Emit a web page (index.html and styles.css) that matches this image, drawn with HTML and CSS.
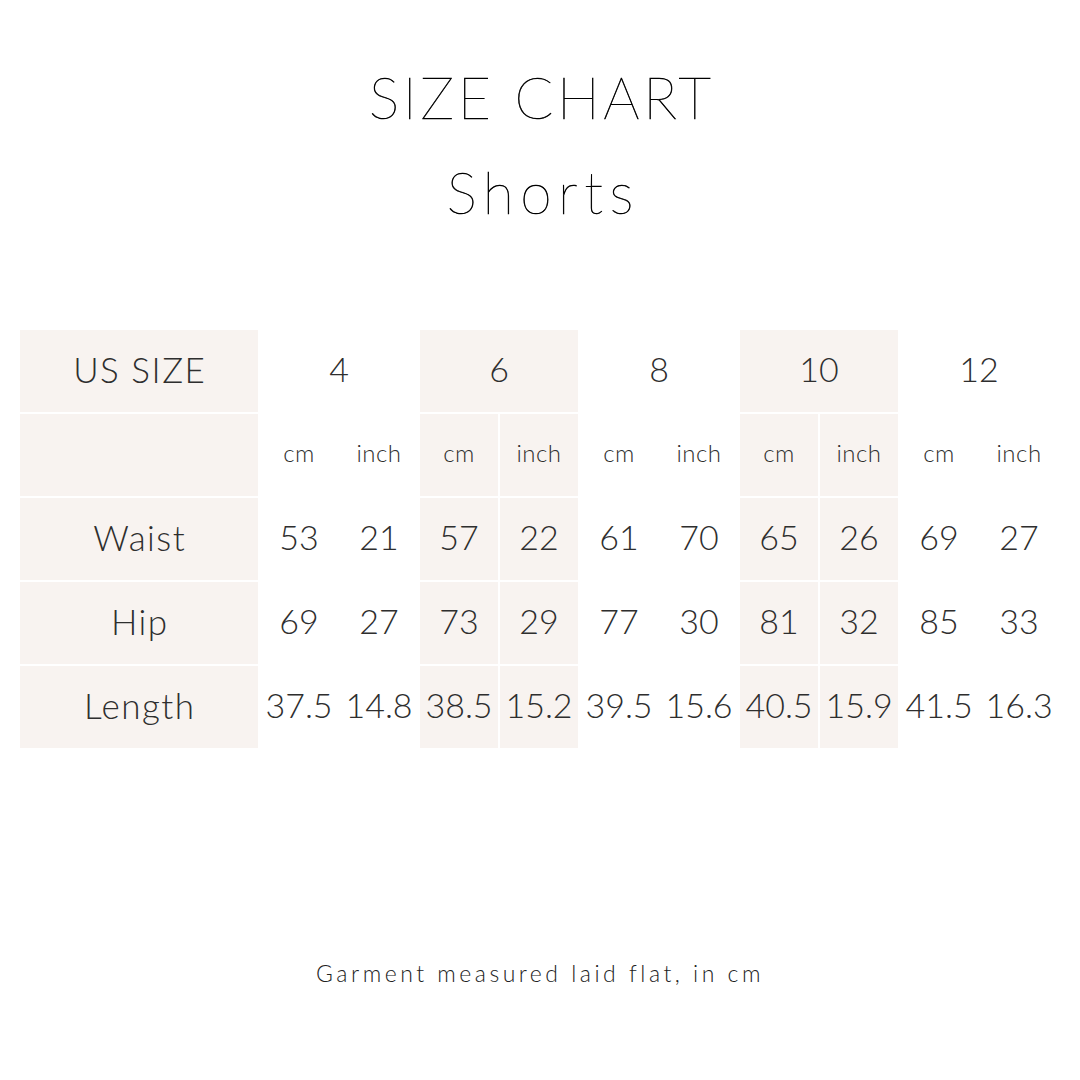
FILE: index.html
```html
<!DOCTYPE html>
<html>
<head>
<meta charset="utf-8">
<link rel="stylesheet" href="styles.css">
</head>
<body>
<div class="page">
  <header class="titles">
    <h1 class="title">SIZE CHART</h1>
    <h2 class="subtitle">Shorts</h2>
  </header>
  <table class="chart">
    <colgroup>
      <col class="c-label">
      <col class="c-val" span="10">
    </colgroup>
    <tr class="row-size">
      <td class="label shade">US SIZE</td>
      <td colspan="2">4</td>
      <td colspan="2" class="shade">6</td>
      <td colspan="2">8</td>
      <td colspan="2" class="shade">10</td>
      <td colspan="2">12</td>
    </tr>
    <tr class="row-unit">
      <td class="label shade"></td>
      <td>cm</td><td>inch</td>
      <td class="shade">cm</td><td class="shade">inch</td>
      <td>cm</td><td>inch</td>
      <td class="shade">cm</td><td class="shade">inch</td>
      <td>cm</td><td>inch</td>
    </tr>
    <tr>
      <td class="label shade">Waist</td>
      <td>53</td><td>21</td>
      <td class="shade">57</td><td class="shade">22</td>
      <td>61</td><td>70</td>
      <td class="shade">65</td><td class="shade">26</td>
      <td>69</td><td>27</td>
    </tr>
    <tr>
      <td class="label shade">Hip</td>
      <td>69</td><td>27</td>
      <td class="shade">73</td><td class="shade">29</td>
      <td>77</td><td>30</td>
      <td class="shade">81</td><td class="shade">32</td>
      <td>85</td><td>33</td>
    </tr>
    <tr>
      <td class="label shade">Length</td>
      <td>37.5</td><td>14.8</td>
      <td class="shade">38.5</td><td class="shade">15.2</td>
      <td>39.5</td><td>15.6</td>
      <td class="shade">40.5</td><td class="shade">15.9</td>
      <td>41.5</td><td>16.3</td>
    </tr>
  </table>
  <p class="note">Garment measured laid flat, in cm</p>
</div>
</body>
</html>
```
FILE: styles.css
```css
html, body {
  margin: 0;
  padding: 0;
  background: #ffffff;
}
.page {
  width: 1080px;
  height: 1080px;
  display: flex;
  flex-direction: column;
  font-family: "Lato", "Noto Sans", sans-serif;
  color: #2b2b2b;
}
.titles {
  display: flex;
  flex-direction: column;
  align-items: center;
  padding-top: 69px;
}
.title, .subtitle {
  margin: 0;
  font-weight: 100;
  font-size: 57px;
  line-height: 1;
  color: #000;
  -webkit-text-stroke: 0.6px #000;
  letter-spacing: 3.6px;
  padding-left: 3.6px;
}
.subtitle {
  margin-top: 38px;
  letter-spacing: 6.5px;
  padding-left: 6.5px;
}
.chart {
  margin: 107px 0 0 18px;
  width: 1042px;
  border-collapse: separate;
  border-spacing: 2px;
  table-layout: fixed;
}
.c-label {
  width: 238px;
}
.c-val {
  width: 78px;
}
.chart td {
  height: 82px;
  padding: 0 0 5px;
  box-sizing: border-box;
  text-align: center;
  vertical-align: middle;
  font-size: 34px;
  font-weight: 300;
  color: #2e2e2e;
  white-space: nowrap;
}
.chart td.label {
  font-size: 35px;
  letter-spacing: 1.5px;
  padding-left: 1.5px;
}
.chart td.shade {
  background: #f8f3f0;
}
.row-unit td {
  font-size: 24px;
  letter-spacing: 0.5px;
}
.note {
  margin: 209px 0 0;
  text-align: center;
  font-size: 23px;
  font-weight: 300;
  letter-spacing: 3.5px;
  color: #222;
}
```
